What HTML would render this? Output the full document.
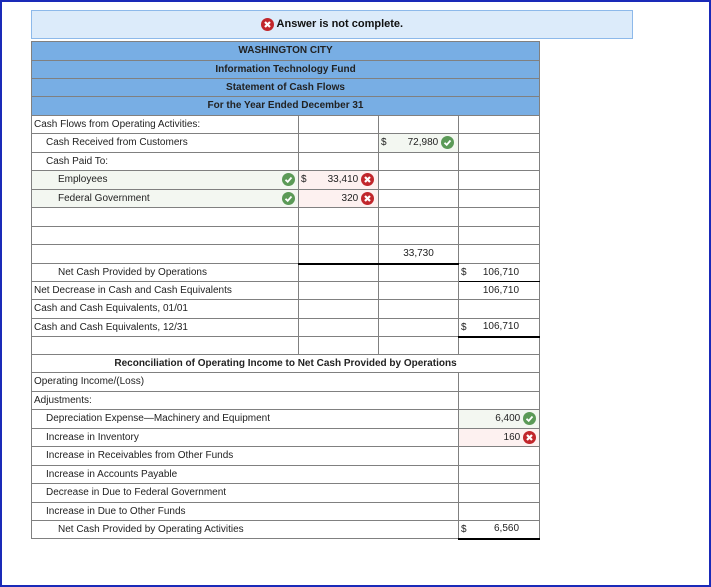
<!DOCTYPE html>
<html><head><style>
html,body{margin:0;padding:0;}
body{width:711px;height:587px;position:relative;overflow:hidden;background:#fff;font-family:"Liberation Sans",Arial,sans-serif;color:#222;}
.frame{position:absolute;left:0;top:0;width:707px;height:583px;border:2px solid #1a2ab8;}
.banner{position:absolute;left:31px;top:10px;width:600px;height:27px;background:#dcebfa;border:1px solid #8db9ea;text-align:center;font-weight:bold;font-size:11px;line-height:27px;color:#111;}
.ic{display:inline-block;width:13px;height:13px;border-radius:50%;vertical-align:middle;position:relative;}
.ic svg{position:absolute;left:0;top:0}
.r{background:#c1262b}.g{background:#5b9a57}
table{position:absolute;left:31px;top:41px;border-collapse:collapse;table-layout:fixed;width:508px;font-size:10px;}
td{border:1px solid #808080;padding:0 2px;height:17px;line-height:12px;white-space:nowrap;overflow:hidden;box-sizing:border-box;}
tr{height:18px}
tr.t{height:19px}
.h td{background:#78aee4;text-align:center;font-weight:bold;color:#222;}
.i1{padding-left:14px}.i2{padding-left:26px}
.num{text-align:right;padding-right:4px;position:relative}
.d{position:absolute;left:2px;top:3px}
.gb{background:#f3f7f1}.rb{background:#fdf1f0}
.tb{border-bottom:2px solid #000}.tt{border-top:1px solid #000}
.lab{position:relative}
.lab .ic{position:absolute;right:3px;top:2px}
</style></head><body>
<div class="frame"></div>
<div class="banner"><span class="ic r"><svg width="13" height="13"><path d="M4 4L9 9M9 4L4 9" stroke="#fff" stroke-width="2.2"/></svg></span> Answer is not complete.</div>
<table>
<colgroup><col style="width:267px"><col style="width:80px"><col style="width:80px"><col style="width:81px"></colgroup>
<tr class="h t"><td colspan="4">WASHINGTON CITY</td></tr>
<tr class="h"><td colspan="4">Information Technology Fund</td></tr>
<tr class="h"><td colspan="4">Statement of Cash Flows</td></tr>
<tr class="h t"><td colspan="4">For the Year Ended December 31</td></tr>
<tr><td>Cash Flows from Operating Activities:</td><td></td><td></td><td></td></tr>
<tr class="t"><td class="i1">Cash Received from Customers</td><td></td><td class="num gb"><span class="d">$</span>72,980 <span class="ic g"><svg width="13" height="13"><path d="M3.5 6.8L5.7 8.8L9.5 4.5" stroke="#fff" stroke-width="1.8" fill="none"/></svg></span></td><td></td></tr>
<tr><td class="i1">Cash Paid To:</td><td></td><td></td><td></td></tr>
<tr class="t"><td class="i2 lab gb">Employees<span class="ic g"><svg width="13" height="13"><path d="M3.5 6.8L5.7 8.8L9.5 4.5" stroke="#fff" stroke-width="1.8" fill="none"/></svg></span></td><td class="num rb"><span class="d">$</span>33,410 <span class="ic r"><svg width="13" height="13"><path d="M4 4L9 9M9 4L4 9" stroke="#fff" stroke-width="2.2"/></svg></span></td><td></td><td></td></tr>
<tr><td class="i2 lab gb">Federal Government<span class="ic g"><svg width="13" height="13"><path d="M3.5 6.8L5.7 8.8L9.5 4.5" stroke="#fff" stroke-width="1.8" fill="none"/></svg></span></td><td class="num rb">320 <span class="ic r"><svg width="13" height="13"><path d="M4 4L9 9M9 4L4 9" stroke="#fff" stroke-width="2.2"/></svg></span></td><td></td><td></td></tr>
<tr class="t"><td></td><td></td><td></td><td></td></tr>
<tr><td></td><td></td><td></td><td></td></tr>
<tr class="t"><td></td><td class="tb"></td><td class="tb" style="text-align:center">33,730</td><td></td></tr>
<tr><td class="i2">Net Cash Provided by Operations</td><td></td><td></td><td class="num" style="border-bottom:1px solid #000;padding-right:20px"><span class="d">$</span>106,710</td></tr>
<tr><td>Net Decrease in Cash and Cash Equivalents</td><td></td><td></td><td class="num" style="padding-right:20px">106,710</td></tr>
<tr class="t"><td>Cash and Cash Equivalents, 01/01</td><td></td><td></td><td class="tt"></td></tr>
<tr><td>Cash and Cash Equivalents, 12/31</td><td></td><td></td><td class="num tt tb" style="padding-right:20px"><span class="d">$</span>106,710</td></tr>
<tr><td></td><td></td><td></td><td></td></tr>
<tr><td colspan="4" style="text-align:center;font-weight:bold">Reconciliation of Operating Income to Net Cash Provided by Operations</td></tr>
<tr class="t"><td colspan="3">Operating Income/(Loss)</td><td></td></tr>
<tr><td colspan="3">Adjustments:</td><td></td></tr>
<tr class="t"><td colspan="3" class="i1">Depreciation Expense—Machinery and Equipment</td><td class="num gb" style="padding-right:3px">6,400 <span class="ic g"><svg width="13" height="13"><path d="M3.5 6.8L5.7 8.8L9.5 4.5" stroke="#fff" stroke-width="1.8" fill="none"/></svg></span></td></tr>
<tr><td colspan="3" class="i1">Increase in Inventory</td><td class="num rb" style="padding-right:3px">160 <span class="ic r"><svg width="13" height="13"><path d="M4 4L9 9M9 4L4 9" stroke="#fff" stroke-width="2.2"/></svg></span></td></tr>
<tr class="t"><td colspan="3" class="i1">Increase in Receivables from Other Funds</td><td></td></tr>
<tr><td colspan="3" class="i1">Increase in Accounts Payable</td><td></td></tr>
<tr class="t"><td colspan="3" class="i1">Decrease in Due to Federal Government</td><td></td></tr>
<tr><td colspan="3" class="i1">Increase in Due to Other Funds</td><td></td></tr>
<tr><td colspan="3" class="i2">Net Cash Provided by Operating Activities</td><td class="num tt tb" style="padding-right:20px"><span class="d">$</span>6,560</td></tr>
</table>
</body></html>
